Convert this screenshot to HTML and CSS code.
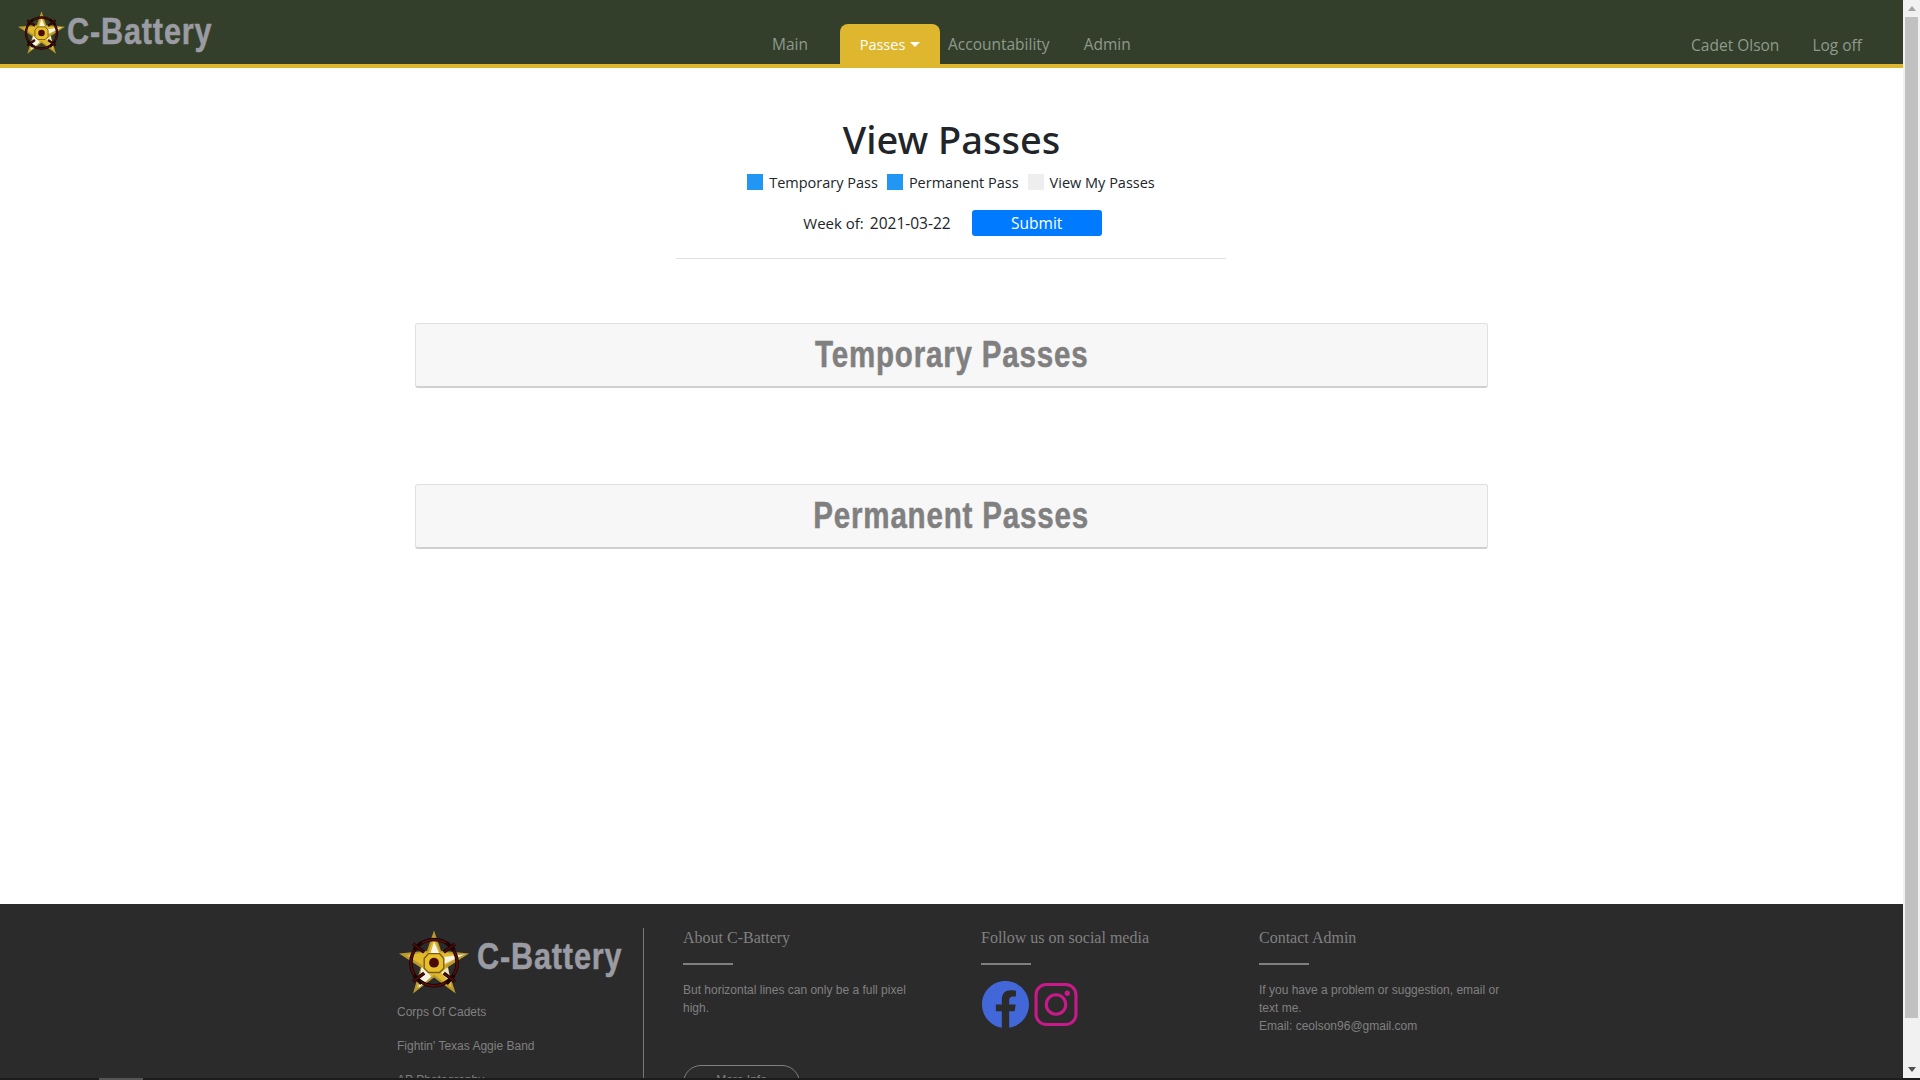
FILE: index.html
```html
<!DOCTYPE html>
<html lang="en">
<head>
    <meta charset="UTF-8">
    <meta name="viewport" content="width=device-width, initial-scale=1.0">
    <title>C-Battery - View Passes</title>
    <link rel="stylesheet" href="styles.css">
</head>
<body>
    <svg class="defs" width="0" height="0" aria-hidden="true">
        <symbol id="star" viewBox="0 0 100 90">
            <polygon points="50,0 60,29 100,33 69,53 81,90 50,67 20,90 31,53 0,33 40,29" fill="#b9992f"/>
            <polygon points="50,8 58,31 90,35 66,50 76,82 50,63 25,82 34,50 10,35 42,31" fill="#e0ba2c"/>
            <polygon points="50,16 58,34 52,44 44,36" fill="#f7f4e6"/>
            <polygon points="64,38 94,34 60,50" fill="#f7f4e6"/>
            <polygon points="32,52 40,58 46,66 28,82" fill="#f7f4e6"/>
            <polygon points="60,60 70,52 74,76" fill="#efe6c0"/>
            <circle cx="50" cy="46" r="33" fill="none" stroke="#160504" stroke-width="5"/>
            <circle cx="50" cy="46" r="33" fill="none" stroke="#5a0d0b" stroke-width="2.5"/>
            <path d="M20 19 L36 31 M80 19 L64 31 M20 73 L36 61 M80 73 L64 61 M32 17 L21 28 M68 17 L79 28 M21 64 L32 76 M79 64 L68 76" stroke="#1d0504" stroke-width="5"/>
            <path d="M20 19 L36 31 M80 19 L64 31 M20 73 L36 61 M80 73 L64 61" stroke="#5a0d0b" stroke-width="2"/>
            <polygon points="42,33 58,33 64,40 64,54 58,60 42,60 36,54 36,40" fill="#e6c02c" stroke="#7c5d10" stroke-width="2"/>
            <circle cx="50" cy="46" r="7" fill="#4a0b08"/>
        </symbol>
    </svg>

    <div class="window">
        <div class="page">
            <nav class="topnav">
                <a class="brand" href="#">
                    <svg class="brand-star"><use href="#star"/></svg>
                    <span class="logo-text">C-Battery</span>
                </a>
                <ul class="nav-links">
                    <li><a href="#">Main</a></li>
                    <li class="active"><a href="#">Passes<span class="caret"></span></a></li>
                    <li class="after-tab"><a href="#">Accountability</a></li>
                    <li class="last-link"><a href="#">Admin</a></li>
                </ul>
                <ul class="nav-user">
                    <li><a href="#">Cadet Olson</a></li>
                    <li><a href="#">Log off</a></li>
                </ul>
            </nav>

            <main class="content">
                <h1>View Passes</h1>
                <div class="legend">
                    <span class="swatch swatch-on"></span><span class="legend-label">Temporary Pass</span>
                    <span class="swatch swatch-on"></span><span class="legend-label">Permanent Pass</span>
                    <span class="swatch swatch-off"></span><span class="legend-label">View My Passes</span>
                </div>
                <form class="week-form">
                    <span class="week-label">Week of:</span>
                    <span class="week-value">2021-03-22</span>
                    <button type="button" class="submit-btn">Submit</button>
                </form>
                <hr class="title-rule">
                <section class="pass-card"><h2>Temporary Passes</h2></section>
                <section class="pass-card"><h2>Permanent Passes</h2></section>
            </main>

            <footer class="footer">
                <div class="footer-brand">
                    <div class="footer-logo">
                        <svg class="footer-star"><use href="#star"/></svg>
                        <span class="logo-text">C-Battery</span>
                    </div>
                    <p>Corps Of Cadets</p>
                    <p>Fightin' Texas Aggie Band</p>
                    <p>AP Photography</p>
                </div>
                <div class="footer-col col-about">
                    <h4>About C-Battery</h4>
                    <div class="short-rule"></div>
                    <p>But horizontal lines can only be a full pixel high.</p>
                    <a class="more-btn" href="#">More Info</a>
                </div>
                <div class="footer-col col-social">
                    <h4>Follow us on social media</h4>
                    <div class="short-rule"></div>
                    <div class="social-icons">
                        <svg class="icon-fb" viewBox="8 8 496 496">
                            <path fill="#4267d8" d="M504 256C504 119 393 8 256 8S8 119 8 256c0 123.78 90.69 226.38 209.25 245V327.69h-63V256h63v-54.64c0-62.15 37-96.48 93.67-96.48 27.14 0 55.52 4.84 55.52 4.84v61h-31.28c-30.8 0-40.41 19.12-40.41 38.73V256h68.78l-11 71.69h-57.78V501C413.31 482.38 504 379.78 504 256z"/>
                        </svg>
                        <svg class="icon-ig" viewBox="0 0 42 42">
                            <rect x="1.5" y="1.5" width="39" height="39" rx="10" fill="none" stroke="#c9198a" stroke-width="3"/>
                            <circle cx="21" cy="21" r="9.5" fill="none" stroke="#c9198a" stroke-width="3"/>
                            <circle cx="32" cy="10" r="2.6" fill="#c9198a"/>
                        </svg>
                    </div>
                </div>
                <div class="footer-col col-contact">
                    <h4>Contact Admin</h4>
                    <div class="short-rule"></div>
                    <p>If you have a problem or suggestion, email or text me.<br>Email: ceolson96@gmail.com</p>
                </div>
            </footer>
        </div>

        <div class="scrollbar">
            <span class="arrow-up"></span>
            <div class="thumb"></div>
            <span class="arrow-down"></span>
        </div>
    </div>
    <div class="bottom-strip"><span class="strip-tab"></span></div>
</body>
</html>
```
FILE: styles.css
```css
html, body {
    height: 100%;
    margin: 0;
}

body {
    display: flex;
    flex-direction: column;
    overflow: hidden;
    background-color: #fff;
    color: #212529;
    font-family: "Open Sans", "Noto Sans", sans-serif;
}

.defs {
    position: absolute;
}

.window {
    flex: 1;
    min-height: 0;
    display: flex;
}

.page {
    flex: 1;
    min-width: 0;
    display: flex;
    flex-direction: column;
    overflow: hidden;
}

/* squeezed bold text, the logo and card titles use a stencil face in the original */
.logo-text {
    display: block;
    width: 170px;
    flex: none;
    font-family: "Liberation Sans", Arial, sans-serif;
    font-size: 36px;
    font-weight: bold;
    line-height: 42px;
    color: #9b9ba3;
    letter-spacing: 1px;
    white-space: nowrap;
    -webkit-text-stroke: 0.5px #9b9ba3;
    transform: scaleX(0.85);
    transform-origin: left center;
}

/* top bar */
.topnav {
    flex: none;
    height: 64px;
    display: flex;
    background-color: #333f2a;
    border-bottom: 4px solid #deb72e;
}

.topnav ul {
    list-style: none;
    margin: 0;
    padding: 0;
    display: flex;
}

.topnav a {
    color: #8e9a8e;
    text-decoration: none;
    font-size: 15.5px;
}

.brand {
    width: 755px;
    flex: none;
    display: flex;
    align-items: center;
    padding-left: 18px;
    box-sizing: border-box;
}

.brand-star {
    width: 47px;
    height: 43px;
    flex: none;
}

.brand .logo-text {
    margin-left: 2px;
}

.nav-links {
    align-items: stretch;
    padding-top: 24px !important;
}

.nav-links li {
    display: flex;
    align-items: center;
    padding: 0 17px;
}

.nav-links .active {
    width: 100px;
    box-sizing: border-box;
    margin-left: 15px;
    padding: 0;
    justify-content: center;
    background-color: #deb72e;
    border-radius: 8px 8px 0 0;
}

.nav-links .active a {
    color: #fff;
    font-size: 14.5px;
}

.nav-links .after-tab {
    padding: 0 0 0 8px;
}

.nav-links .last-link {
    padding: 0 0 0 34px;
}

.caret {
    display: inline-block;
    margin-left: 5px;
    vertical-align: 3px;
    border-top: 5px solid #fff;
    border-left: 5px solid transparent;
    border-right: 5px solid transparent;
}

.nav-user {
    margin-left: auto !important;
    padding: 34px 41px 0 0 !important;
    gap: 33px;
}

/* passes */
.content {
    flex: none;
    height: 836px;
    box-sizing: border-box;
    padding-top: 47px;
    display: flex;
    flex-direction: column;
    align-items: center;
}

h1 {
    margin: 0;
    font-family: "Noto Sans", "Open Sans", sans-serif;
    font-size: 38px;
    font-weight: 500;
    line-height: 48px;
}

.legend {
    display: flex;
    align-items: center;
    height: 22px;
    margin-top: 8px;
    margin-left: 8px;
    font-size: 14.5px;
}

.swatch {
    width: 16px;
    height: 16px;
    margin-right: 6px;
}

.swatch-on {
    background-color: #2196f3;
}

.swatch-off {
    background-color: #eee;
}

.legend-label {
    margin-right: 9px;
}

.week-form {
    display: flex;
    align-items: center;
    margin-top: 17px;
    margin-left: 2px;
    font-size: 15px;
}

.week-value {
    margin-left: 6px;
    margin-right: 21px;
    font-size: 15.5px;
}

.submit-btn {
    width: 130px;
    height: 26px;
    padding: 0;
    border: none;
    border-radius: 3px;
    background-color: #007bff;
    color: #fff;
    font-family: inherit;
    font-size: 15.5px;
}

.title-rule {
    width: 550px;
    margin: 22px 1px 0 0;
    border: none;
    border-top: 1px solid #e2e2e2;
}

.pass-card {
    width: 1073px;
    height: 65px;
    box-sizing: border-box;
    margin-top: 96px;
    display: flex;
    align-items: center;
    justify-content: center;
    background-color: #f7f7f7;
    border: 1px solid #e0e0e0;
    border-bottom: 2px solid #d0d0d0;
    border-radius: 3px;
}

.title-rule + .pass-card {
    margin-top: 64px;
}

.pass-card h2 {
    margin: 0;
    font-family: "Liberation Sans", Arial, sans-serif;
    font-size: 36px;
    font-weight: bold;
    color: #808080;
    letter-spacing: 1px;
    white-space: nowrap;
    -webkit-text-stroke: 0.5px #808080;
    transform: scaleX(0.82);
}

/* footer */
.footer {
    flex: 1;
    min-height: 0;
    display: flex;
    padding-left: 397px;
    background-color: #2b2b2b;
    color: #808080;
    font-family: "Liberation Sans", Arial, sans-serif;
    font-size: 12px;
    line-height: 18px;
}

.footer p {
    margin: 0;
}

.footer-brand {
    width: 247px;
    height: 150px;
    flex: none;
    box-sizing: border-box;
    margin-top: 24px;
    border-right: 1px solid #777;
    overflow: hidden;
}

.footer-brand p {
    margin-bottom: 16px;
}

.footer-logo {
    display: flex;
    align-items: flex-start;
    height: 75px;
    padding-left: 2px;
}

.footer-star {
    width: 70px;
    height: 64px;
    flex: none;
    margin-top: 2px;
}

.footer-logo .logo-text {
    margin-left: 8px;
    margin-top: 8px;
}

.footer-col {
    flex: none;
    padding-top: 25px;
}

.col-about {
    width: 298px;
    margin-left: 39px;
}

.col-about p {
    width: 235px;
}

.col-social {
    width: 278px;
}

.col-contact {
    width: 245px;
}

.footer-col h4 {
    margin: 0;
    font-family: "Liberation Serif", "Times New Roman", serif;
    font-size: 16px;
    font-weight: normal;
    line-height: 18px;
}

.short-rule {
    width: 50px;
    height: 2px;
    margin: 16px 0;
    background-color: #808080;
}

.more-btn {
    display: block;
    width: 115px;
    height: 36px;
    margin-top: 48px;
    border: 1px solid #808080;
    border-radius: 18px;
    color: #808080;
    text-align: center;
    line-height: 28px;
    text-decoration: none;
}

.social-icons {
    display: flex;
    align-items: center;
    gap: 5px;
    margin-left: 1px;
}

.icon-fb {
    width: 47px;
    height: 47px;
}

.icon-ig {
    width: 44px;
    height: 43px;
}

/* page scrollbar */
.scrollbar {
    width: 17px;
    flex: none;
    display: flex;
    flex-direction: column;
    align-items: center;
    background-color: #f1f1f1;
}

.thumb {
    width: 13px;
    height: 1001px;
    margin-top: 6px;
    background-color: #c1c1c1;
}

.arrow-up {
    margin-top: 6px;
    border-bottom: 5px solid #a3a3a3;
    border-left: 4px solid transparent;
    border-right: 4px solid transparent;
}

.arrow-down {
    margin-top: auto;
    margin-bottom: 6px;
    border-top: 5px solid #505050;
    border-left: 4px solid transparent;
    border-right: 4px solid transparent;
}

.bottom-strip {
    flex: none;
    height: 2px;
    background-color: #1c1c1c;
}

.strip-tab {
    display: block;
    width: 44px;
    height: 2px;
    margin-left: 99px;
    background-color: #555;
}
```
